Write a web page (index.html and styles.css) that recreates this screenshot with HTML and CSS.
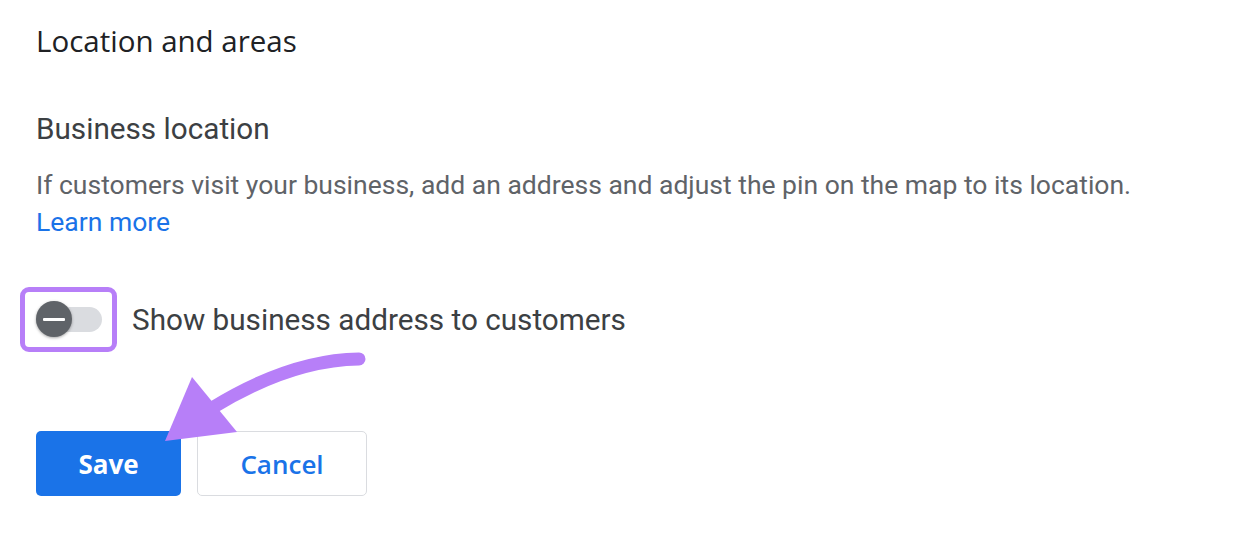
FILE: index.html
```html
<!DOCTYPE html>
<html>
<head>
<meta charset="utf-8">
<link rel="stylesheet" href="styles.css">
</head>
<body>
<main class="page">
  <h1 class="title">Location and areas</h1>
  <h2 class="subtitle">Business location</h2>
  <p class="desc">If customers visit your business, add an address and adjust the pin on the map to its location.<br><a class="link" href="#">Learn more</a></p>
  <div class="toggle-row">
    <div class="toggle">
      <span class="track"></span>
      <span class="knob"><span class="dash"></span></span>
      <span class="highlight"></span>
    </div>
    <span class="toggle-label">Show business address to customers</span>
  </div>
  <div class="actions">
    <button class="btn btn-primary">Save</button>
    <button class="btn btn-secondary">Cancel</button>
    <svg class="arrow" width="220" height="110" viewBox="150 340 220 110">
      <path d="M359 359 Q 290 360 212 408" fill="none" stroke="#b77ff8" stroke-width="13" stroke-linecap="round"/>
      <polygon points="165,441 192,377 237,432" fill="#b77ff8"/>
    </svg>
  </div>
</main>
</body>
</html>
```
FILE: styles.css
```css
* { box-sizing: border-box; }
html, body { margin: 0; padding: 0; background: #fff; }
body { font-family: Roboto, "Noto Sans", sans-serif; }
.page { padding: 21px 36px 0 36px; position: relative; }
.title {
  margin: 0;
  font-family: "Open Sans", sans-serif;
  font-weight: 500;
  font-size: 29.5px;
  line-height: 40px;
  color: #202124;
}
.subtitle {
  margin: 48px 0 0 0;
  font-weight: 400;
  font-size: 29.7px;
  line-height: 40px;
  color: #3c4043;
}
.desc {
  margin: 17px 0 0 0;
  font-size: 26.5px;
  line-height: 37px;
  color: #5f6368;
}
.link { color: #1a73e8; text-decoration: none; }
.toggle-row {
  display: flex;
  align-items: center;
  gap: 30px;
  margin-top: 60px;
}
.toggle { position: relative; width: 66px; height: 36px; flex: none; }
.track {
  position: absolute; left: 0; top: 5px; width: 66px; height: 25px;
  border-radius: 13px; background: #dadce0;
}
.knob {
  position: absolute; left: 0; top: -1px; width: 36px; height: 36px; border-radius: 50%;
  background: #5f6368; box-shadow: 0 1px 3px rgba(0,0,0,.35);
  display: flex; align-items: center; justify-content: center;
}
.dash { width: 22px; height: 3px; background: #fff; border-radius: 1px; }
.highlight {
  position: absolute; left: -16px; top: -15px; width: 97px; height: 65px;
  border: 5px solid #b77ff8; border-radius: 9px;
}
.toggle-label { font-size: 29.7px; color: #3c4043; line-height: 40px; }
.actions {
  display: flex; gap: 16px; margin-top: 91px; position: relative;
}
.btn {
  height: 65px; border-radius: 5px; font-family: "Open Sans", sans-serif;
  font-size: 26px; font-weight: 600; cursor: pointer;
}
.btn-primary { width: 145px; background: #1a73e8; color: #fff; border: none; font-weight: 700; }
.btn-secondary { width: 170px; background: #fff; color: #1a73e8; border: 1px solid #dadce0; }
.arrow { position: absolute; left: 114px; top: -91px; }
```
